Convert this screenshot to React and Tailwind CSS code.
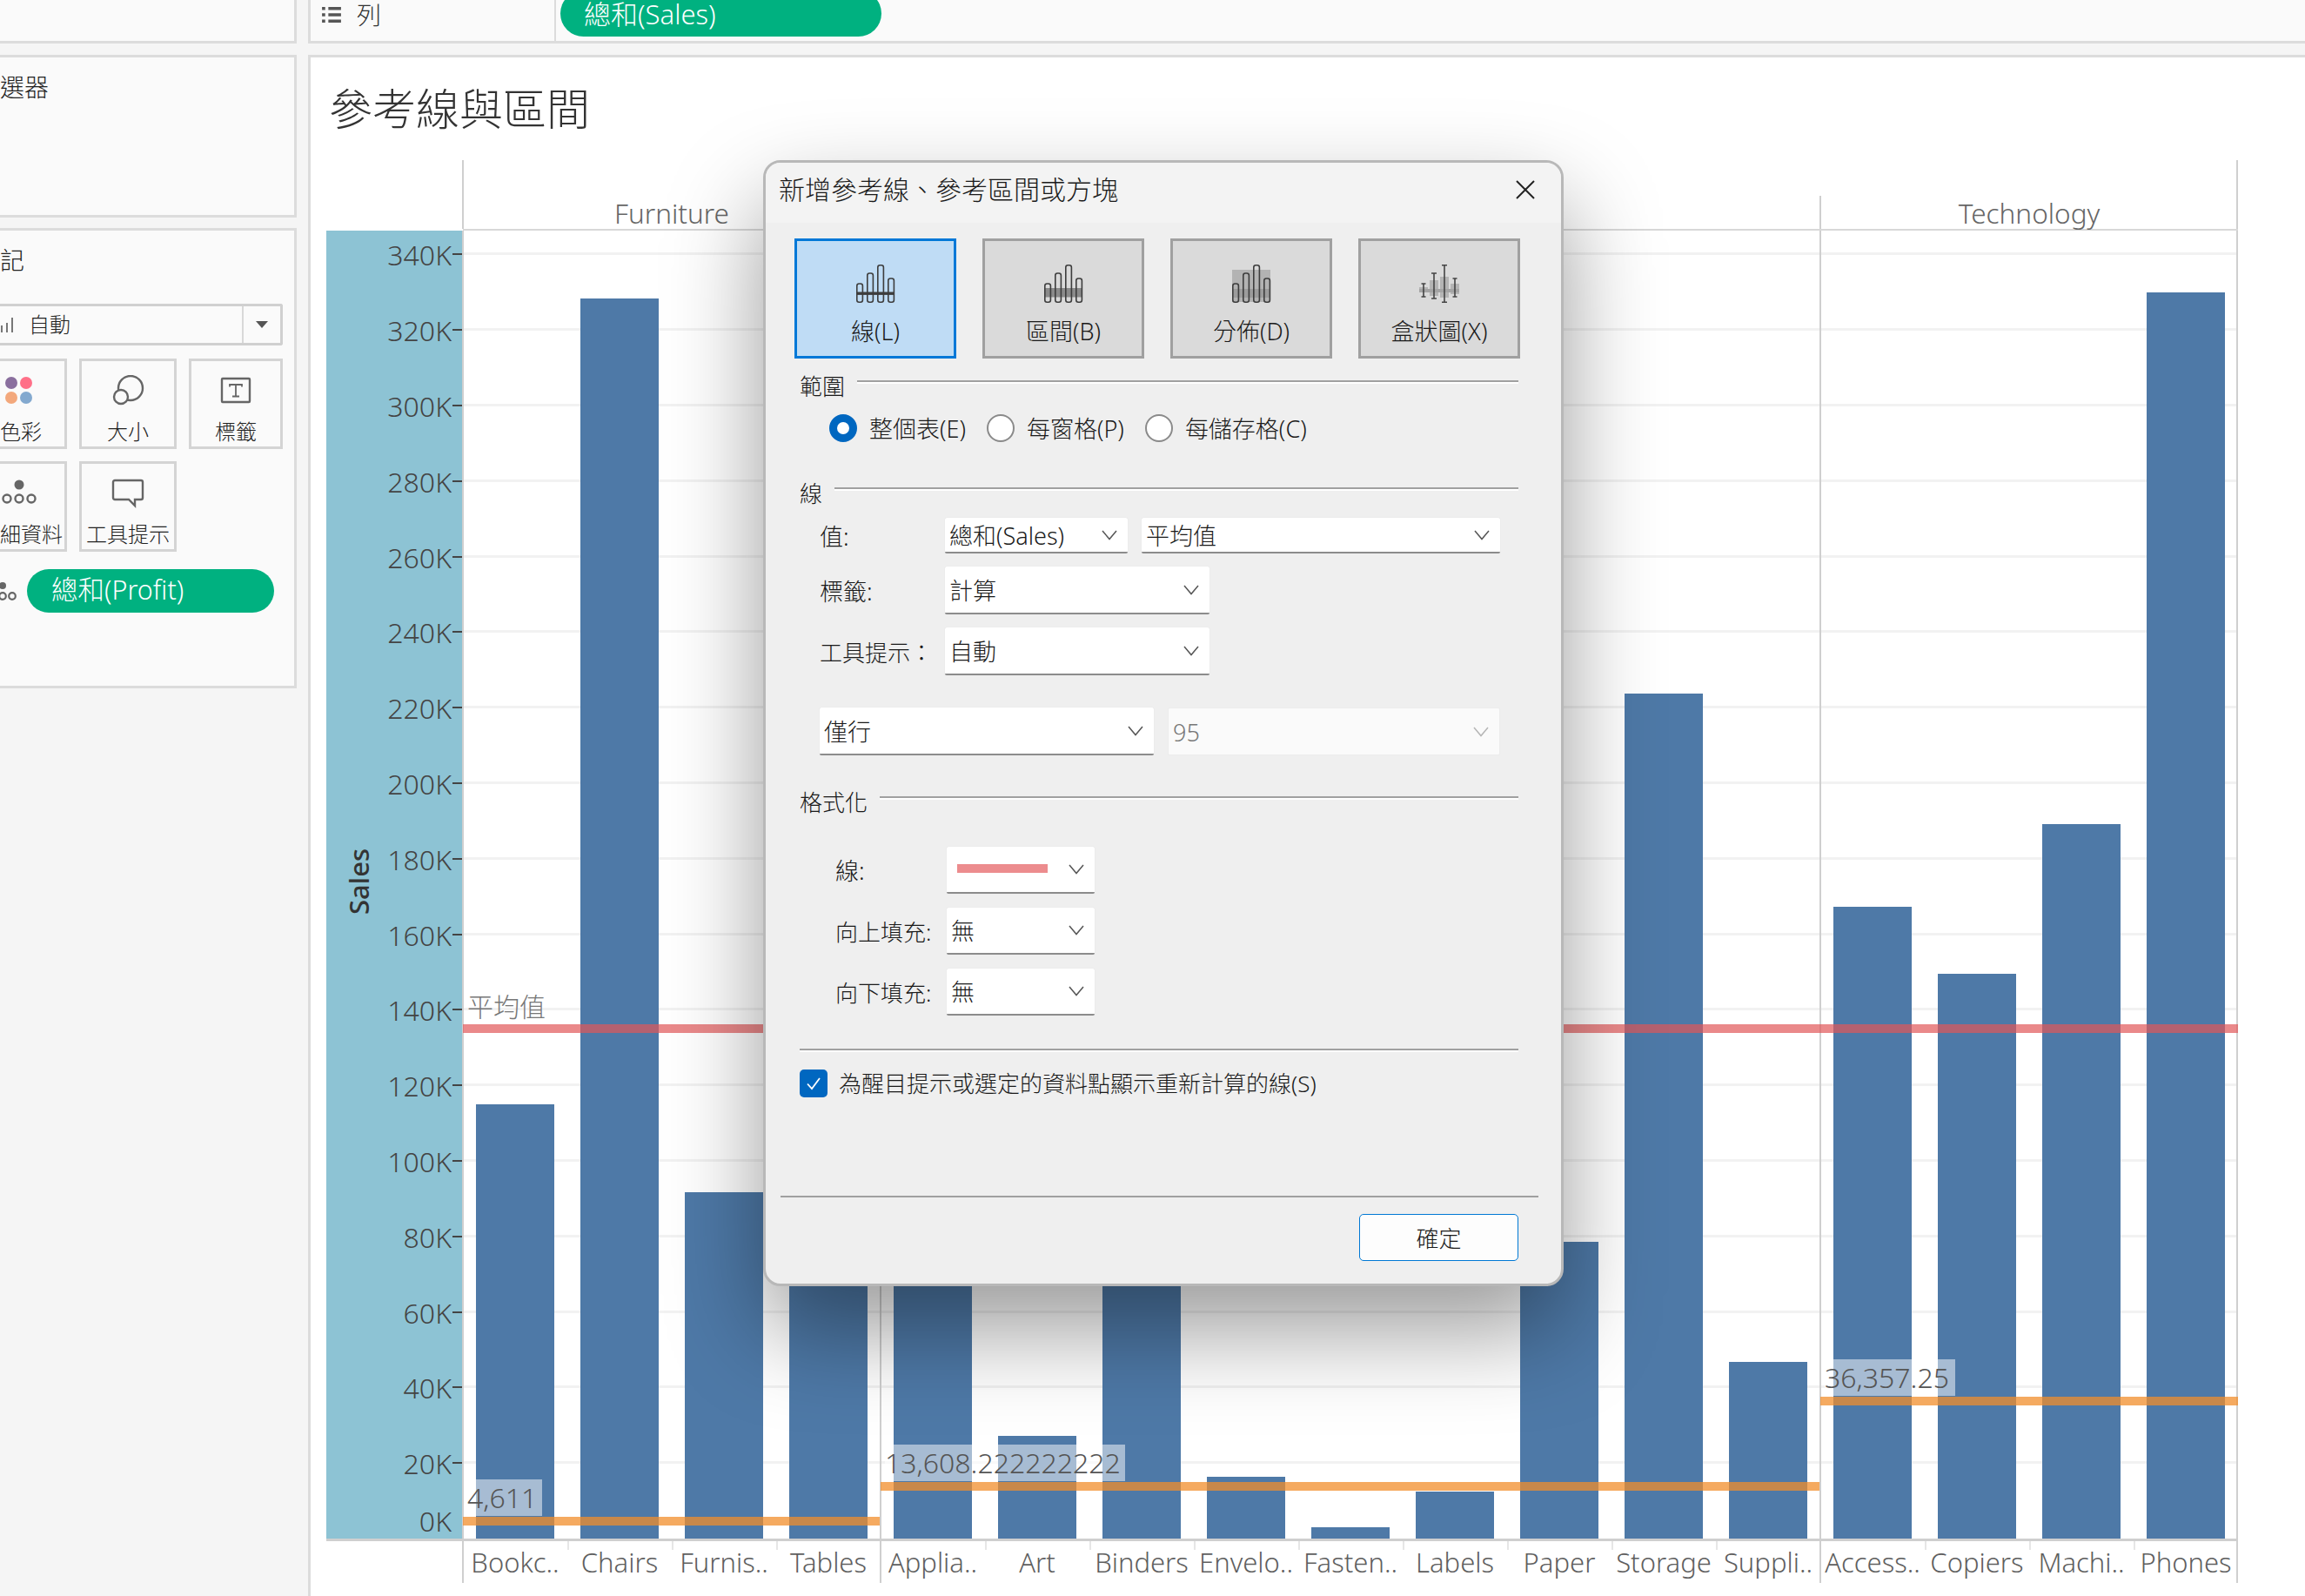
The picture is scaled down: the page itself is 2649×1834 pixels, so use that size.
import React from 'react';

const panes = [
  {
    items: [['Bookc..', 114880], ['Chairs', 328449], ['Furnis..', 91705], ['Tables', 206966]],
    label: '4,611',
    labelBottom: 26,
    labelWidth: 86,
    lineBottom: 15,
  },
  {
    items: [
      ['Applia..', 107532], ['Art', 27119], ['Binders', 203413], ['Envelo..', 16476], ['Fasten..', 3024],
      ['Labels', 12486], ['Paper', 78479], ['Storage', 223844], ['Suppli..', 46674],
    ],
    label: '13,608.222222222',
    labelBottom: 66,
    labelWidth: 276,
    lineBottom: 55,
  },
  {
    items: [['Access..', 167380], ['Copiers', 149528], ['Machi..', 189239], ['Phones', 330007]],
    label: '36,357.25',
    labelBottom: 164,
    labelWidth: 150,
    lineBottom: 153,
  },
];

const PX_PER_K = 4.34;
const ticks = [];
for (let v = 0; v <= 340; v += 20) ticks.push(v);

const Chevron = ({ light }) => (
  <svg width="18" height="12" viewBox="0 0 18 12" fill="none" stroke={light ? '#b5b5b5' : '#555'} strokeWidth="1.5">
    <path d="M1 1 L9 10.5 L17 1" />
  </svg>
);

const Select = ({ width, height, children, disabled }) => (
  <div
    style={{ width, height }}
    className={`shrink-0 flex items-center justify-between pl-[5px] pr-[12px] rounded-[2px] ${
      disabled
        ? 'bg-[#fafafa] border border-[#ececec] text-[#777]'
        : 'bg-white border-b-2 border-[#8c8c8c] shadow-[0_0_1px_rgba(0,0,0,0.12)]'
    }`}
  >
    <span className="whitespace-nowrap pt-[2px]">{children}</span>
    <Chevron light={disabled} />
  </div>
);

const Section = ({ title, gap }) => (
  <div className="flex items-start h-[34px]" style={{ columnGap: gap }}>
    <span className="leading-[34px] whitespace-nowrap text-[26px]">{title}</span>
    <div className="flex-1 mt-[10px] h-[4px] border-t-2 border-b-2 border-t-[#a0a0a0] border-b-white" />
  </div>
);

const Radio = ({ checked, children }) => (
  <div className="flex items-center gap-[14px]">
    <span
      className={`w-[32px] h-[32px] rounded-full bg-white ${
        checked ? 'border-[9px] border-[#0067c0]' : 'border-2 border-[#8a8a8a] bg-[#f6f6f6]'
      }`}
    />
    <span className="whitespace-nowrap pt-[2px]">{children}</span>
  </div>
);

const Bars = ({ children }) => (
  <>
    {children}
    {[[0.8, 22], [12.8, 10], [24.8, 0.8], [36.8, 16]].map(([x, y]) => (
      <rect key={x} x={x} y={y} width="6.6" height={43.2 - y} rx="2.4" fill="none" stroke="#3d3d3d" strokeWidth="1.6" />
    ))}
  </>
);

const TypeIcon = ({ kind }) => (
  <svg width="44" height="44" viewBox="0 0 44 44" className="overflow-visible">
    {kind === 'line' && (
      <Bars>
        <rect x="0" y="31.5" width="44" height="3.4" fill="#3d3d3d" />
      </Bars>
    )}
    {kind === 'band' && (
      <Bars>
        <rect x="0" y="27" width="44" height="10.5" fill="#8a8a8a" />
      </Bars>
    )}
    {kind === 'dist' && (
      <Bars>
        <rect x="0" y="6" width="44" height="37" fill="#b3b3b3" />
        <rect x="0" y="28" width="44" height="10" fill="#9c9c9c" />
      </Bars>
    )}
    {kind === 'box' && (
      <g>
        <rect x="-1" y="26" width="10" height="6" fill="#b4b4b4" />
        <rect x="11" y="18" width="10" height="18" fill="#b4b4b4" />
        <rect x="23" y="14" width="10" height="24" fill="#b4b4b4" />
        <rect x="35" y="22" width="10" height="12" fill="#b4b4b4" />
        <rect x="-1" y="28" width="46" height="4" fill="#a4a4a4" />
        <path
          d="M4 22v15M1.5 22h5M1.5 37h5M16 10v29M13 10h6M13 39h6M28 0.8v42.4M25 0.8h6M25 43.2h6M40 16v21M37.5 16h5M37.5 37h5"
          stroke="#444"
          strokeWidth="1.6"
          fill="none"
        />
      </g>
    )}
  </svg>
);

const TypeButton = ({ kind, active, children }) => (
  <div
    className={`shrink-0 w-[186px] h-[138px] border-[3px] flex flex-col items-center pt-[27px] ${
      active ? 'bg-[#bfdcf5] border-[#0078d7]' : 'bg-[#dadada] border-[#a0a0a0]'
    }`}
  >
    <TypeIcon kind={kind} />
    <span className="mt-[15px] leading-[36px]">{children}</span>
  </div>
);

const MarkCard = ({ icon, label, width, first }) => (
  <div
    style={{ width }}
    className={`h-[104px] border-[3px] border-[#d4d4d4] flex flex-col ${first ? 'border-l-0 items-start' : 'items-center'}`}
  >
    <div className="h-[56px] mt-[6px] flex items-center">{icon}</div>
    <span className="mt-[4px] leading-[30px] whitespace-nowrap">{label}</span>
  </div>
);

const ColorIcon = () => (
  <svg width="38" height="36" viewBox="0 0 38 36" className="-ml-[1px]">
    <circle cx="14" cy="9" r="7" fill="#8a6f9e" />
    <circle cx="31" cy="9" r="7" fill="#ff7088" />
    <circle cx="14" cy="26" r="7" fill="#f3a87c" />
    <circle cx="31" cy="26" r="7" fill="#83a9cf" />
  </svg>
);

const SizeIcon = () => (
  <svg width="38" height="36" viewBox="0 0 38 36" fill="none" stroke="#666" strokeWidth="2.4">
    <circle cx="22" cy="15" r="14" />
    <circle cx="11" cy="25" r="8" fill="#fafafa" />
  </svg>
);

const LabelIcon = () => (
  <svg width="36" height="32" viewBox="0 0 36 32" fill="none" stroke="#666" strokeWidth="2.4">
    <rect x="2" y="2" width="32" height="27" rx="1" />
    <path d="M11 11.5V9h14v2.5M18 9v13M14 22.5h8" strokeWidth="1.8" />
  </svg>
);

const DetailIcon = () => (
  <svg width="42" height="34" viewBox="0 0 42 34" fill="none" stroke="#666" strokeWidth="2.4">
    <circle cx="22" cy="7" r="5.5" fill="#666" stroke="none" />
    <circle cx="8" cy="23" r="4.5" />
    <circle cx="22" cy="23" r="4.5" />
    <circle cx="36" cy="23" r="4.5" />
  </svg>
);

const TooltipIcon = () => (
  <svg width="38" height="34" viewBox="0 0 38 34" fill="none" stroke="#666" strokeWidth="2.4">
    <path d="M4 2h30a2 2 0 0 1 2 2v18a2 2 0 0 1-2 2h-7v7l-7-7H4a2 2 0 0 1-2-2V4a2 2 0 0 1 2-2z" />
  </svg>
);

const LeftPanel = () => (
  <div className="w-[341px] mr-[13px] flex flex-col shrink-0 text-[24px] text-[#222]">
    <div className="h-[50px] bg-[#fafafa] border-r-[3px] border-b-[3px] border-[#dcdcdc]" />
    <div className="mt-[13px] h-[187px] bg-[#fafafa] border-y-[3px] border-r-[3px] border-[#dcdcdc]">
      <div className="text-[28px] leading-[34px] mt-[17px]">選器</div>
    </div>
    <div className="mt-[12px] h-[529px] bg-[#fafafa] border-y-[3px] border-r-[3px] border-[#dcdcdc] pr-[13px]">
      <div className="text-[28px] leading-[34px] mt-[17px]">記</div>
      <div className="mt-[33px] h-[48px] border-y-[3px] border-r-[3px] border-[#d0d0d0] rounded-r-[3px] flex items-center">
        <svg width="16" height="20" viewBox="0 0 16 20" fill="none" stroke="#777" strokeWidth="2">
          <path d="M2 11v8M8 8v11M14 2v17" />
        </svg>
        <span className="ml-[17px] flex-1">自動</span>
        <div className="w-[44px] h-full border-l-2 border-[#d8d8d8] flex items-center justify-center">
          <div className="w-0 h-0 border-x-[7px] border-x-transparent border-t-[8px] border-t-[#555]" />
        </div>
      </div>
      <div className="mt-[15px] flex gap-[14px]">
        <MarkCard first width={77} icon={<ColorIcon />} label="色彩" />
        <MarkCard width={112} icon={<SizeIcon />} label="大小" />
        <MarkCard width={108} icon={<LabelIcon />} label="標籤" />
      </div>
      <div className="mt-[14px] flex gap-[14px]">
        <MarkCard first width={77} icon={<DetailIcon />} label="細資料" />
        <MarkCard width={112} icon={<TooltipIcon />} label="工具提示" />
      </div>
      <div className="mt-[20px] flex items-center h-[50px]">
        <svg width="22" height="30" viewBox="0 0 22 30" fill="none" stroke="#666" strokeWidth="2.2" className="-ml-[3px] mr-[12px] mt-[4px]">
          <circle cx="6" cy="7" r="4" fill="#666" stroke="none" />
          <circle cx="6" cy="19" r="3.8" />
          <circle cx="17" cy="19" r="3.8" />
        </svg>
        <div className="w-[284px] h-[50px] rounded-full bg-[#00b180] text-white text-[30.5px] leading-[46px] flex items-start pl-[28px]">
          總和(Profit)
        </div>
      </div>
    </div>
  </div>
);

const paneLine = 'shadow-[-1px_0_0_#cfcfcf,inset_1px_0_0_#cfcfcf]';
const lastPaneLine = 'shadow-[-1px_0_0_#cfcfcf,inset_1px_0_0_#cfcfcf,inset_-2px_0_0_#cfcfcf]';

const ChartArea = () => (
  <div className="flex flex-col">
    {/* pane headers */}
    <div className="flex h-[81px]">
      <div className="w-[157px]" />
      <div className="w-[2040px] flex border-b-2 border-[#d8d8d8] text-[31.5px] text-[#666]">
        <div className={`w-[480px] flex items-end justify-center leading-[36px] ${paneLine}`}>Furniture</div>
        <div className="w-[1080px]" />
        <div className="w-[480px] relative flex items-end justify-center leading-[36px] shadow-[inset_-2px_0_0_#cfcfcf]">
          <div className="absolute -left-[1px] bottom-0 top-[41px] w-[2px] bg-[#cfcfcf]" />
          Technology
        </div>
      </div>
    </div>

    {/* plot */}
    <div className="flex h-[1503px]">
      <div className="relative w-[157px] bg-[#8dc3d4] text-[32px] text-[#444]">
        {ticks.map((v) => (
          <div key={v}>
            <div
              className="absolute right-[13px] leading-[40px] whitespace-nowrap"
              style={{ bottom: v === 0 ? 0 : v * PX_PER_K - 21 }}
            >
              {v}K
            </div>
            {v > 0 && (
              <div className="absolute right-0 w-[12px] h-[2px] bg-[#444]" style={{ bottom: v * PX_PER_K - 1 }} />
            )}
          </div>
        ))}
        <div className="absolute left-[37px] top-[748px] -translate-x-1/2 -translate-y-1/2 -rotate-90 text-[31px] font-medium text-[#333] whitespace-nowrap">
          Sales
        </div>
      </div>

      <div className="relative w-[2040px] flex">
        {ticks.filter((v) => v > 0).map((v) => (
          <div key={v} className="absolute left-0 right-0 h-[3px] bg-[#f2f2f2]" style={{ bottom: v * PX_PER_K - 1 }} />
        ))}
        {panes.map((pane, i) => (
          <div key={pane.label} className={`relative flex items-end ${i === 2 ? lastPaneLine : paneLine}`}>
            {pane.items.map(([name, value]) => (
              <div key={name} className="w-[120px] px-[15px]">
                <div className="bg-[#4e79a7]" style={{ height: (value / 1000) * PX_PER_K }} />
              </div>
            ))}
            <div
              className="absolute left-[5px] h-[42px] leading-[42px] bg-white/50 text-[32px] text-[#555] whitespace-nowrap"
              style={{ bottom: pane.labelBottom, width: pane.labelWidth }}
            >
              {pane.label}
            </div>
            <div
              className="absolute left-0 right-0 h-[10px] bg-[#f28e2b]/75"
              style={{ bottom: pane.lineBottom }}
            />
          </div>
        ))}
        <div className="absolute left-0 right-0 bottom-[581px] h-[10px] bg-[#e15759]/70" />
        <div className="absolute left-[5px] bottom-[591px] leading-[40px] text-[30px] text-[#777]">平均值</div>
      </div>
    </div>

    {/* axis */}
    <div className="h-[3px] w-[2197px] bg-[#cfcfcf]" />
    <div className="flex h-[48px] text-[31px] text-[#5f5f5f]">
      <div className="w-[157px]" />
      {panes.map((pane, i) => (
        <div key={pane.label} className={`flex ${i === 2 ? lastPaneLine : paneLine}`}>
          {pane.items.map(([name], j) => (
            <div key={name} className="relative w-[120px] flex items-center justify-center whitespace-nowrap leading-[46px]">
              {j > 0 && <div className="absolute left-0 top-0 w-[2px] h-[10px] bg-[#e6e6e6]" />}
              {name}
            </div>
          ))}
        </div>
      ))}
    </div>
  </div>
);

const Dialog = () => (
  <div className="absolute left-[877px] top-[184px] w-[920px] h-[1294px] rounded-[20px] border-[3px] border-[#b8b8b8] bg-[#efefef] flex flex-col overflow-hidden shadow-[0_50px_110px_rgba(0,0,0,0.4)] text-[27px] text-[#1a1a1a] z-10">
    <div className="h-[69px] shrink-0 bg-[#f3f3f3] flex items-center justify-between pl-[15px] pr-[30px] pb-[8px]">
      <span className="text-[30px] whitespace-nowrap">新增參考線、參考區間或方塊</span>
      <svg width="22" height="22" viewBox="0 0 22 22" stroke="#222" strokeWidth="2">
        <path d="M1 1L21 21M21 1L1 21" />
      </svg>
    </div>

    <div className="flex-1 flex flex-col pl-[39px] pr-[49px] leading-[34px]">
      <div className="flex gap-[30px] -ml-[6px] mt-[18px]">
        <TypeButton kind="line" active>線(L)</TypeButton>
        <TypeButton kind="band">區間(B)</TypeButton>
        <TypeButton kind="dist">分佈(D)</TypeButton>
        <TypeButton kind="box">盒狀圖(X)</TypeButton>
      </div>

      <div className="mt-[15px]"><Section title="範圍" gap={14} /></div>
      <div className="mt-[14px] ml-[34px] flex items-center gap-[24px] h-[34px]">
        <Radio checked>整個表(E)</Radio>
        <Radio>每窗格(P)</Radio>
        <Radio>每儲存格(C)</Radio>
      </div>

      <div className="mt-[41px]"><Section title="線" gap={14} /></div>
      <div className="mt-[11px] flex items-center pl-[23px]">
        <span className="w-[144px] pt-[2px]">值:</span>
        <Select width={210} height={41}>總和(Sales)</Select>
        <div className="w-[16px]" />
        <Select width={412} height={41}>平均值</Select>
      </div>
      <div className="mt-[15px] flex items-center pl-[23px]">
        <span className="w-[144px] pt-[2px]">標籤:</span>
        <Select width={304} height={55}>計算</Select>
      </div>
      <div className="mt-[15px] flex items-center pl-[23px]">
        <span className="w-[144px] pt-[2px] text-[26px] whitespace-nowrap">工具提示：</span>
        <Select width={304} height={55}>自動</Select>
      </div>
      <div className="mt-[37px] flex items-center gap-[16px] pl-[23px]">
        <Select width={384} height={55}>僅行</Select>
        <Select width={382} height={55} disabled>95</Select>
      </div>

      <div className="mt-[37px]"><Section title="格式化" gap={14} /></div>
      <div className="mt-[34px] flex items-center pl-[41px]">
        <span className="w-[128px] pt-[2px]">線:</span>
        <Select width={170} height={54}>
          <div className="w-[104px] h-[10px] ml-[7px] -mt-[4px] bg-[#ec8c8e]" />
        </Select>
      </div>
      <div className="mt-[16px] flex items-center pl-[41px]">
        <span className="w-[128px] pt-[2px] text-[26px] whitespace-nowrap">向上填充:</span>
        <Select width={170} height={54}>無</Select>
      </div>
      <div className="mt-[16px] flex items-center pl-[41px]">
        <span className="w-[128px] pt-[2px] text-[26px] whitespace-nowrap">向下填充:</span>
        <Select width={170} height={54}>無</Select>
      </div>

      <div className="mt-[38px] h-[4px] border-t-2 border-b-2 border-t-[#a0a0a0] border-b-white" />

      <div className="mt-[19px] flex items-center gap-[13px]">
        <div className="w-[32px] h-[32px] rounded-[5px] bg-[#0067c0] flex items-center justify-center">
          <svg width="18" height="16" viewBox="0 0 18 16" fill="none" stroke="white" strokeWidth="1.8">
            <path d="M2 8.5L7 14L16 2" />
          </svg>
        </div>
        <span className="whitespace-nowrap text-[26px]">為醒目提示或選定的資料點顯示重新計算的線(S)</span>
      </div>
    </div>

    <div className="ml-[17px] mr-[26px] h-[101px] shrink-0 border-t-2 border-[#a0a0a0] pt-[19px] pr-[23px] flex justify-end">
      <button className="w-[183px] h-[54px] pt-[2px] bg-[#fdfdfd] border-[1.5px] border-[#0078d4] rounded-[5px] text-[26px]">確定</button>
    </div>
  </div>
);

export default function App() {
  return (
    <div className="relative w-[2649px] h-[1834px] overflow-hidden bg-[#f5f5f5] flex font-['Noto_Sans','Noto_Sans_CJK_TC',sans-serif] font-light">
      <LeftPanel />

      <div className="flex-1 flex flex-col min-w-0">
        <div className="h-[50px] shrink-0 flex bg-[#fafafa] border-l-[3px] border-b-[3px] border-[#dcdcdc]">
          <div className="w-[282px] flex items-start border-r-2 border-[#dcdcdc] pl-[12px] text-[28px] leading-[34px] text-[#333]">
            <svg width="24" height="20" viewBox="0 0 24 22" fill="#555" className="mt-[7px] mr-[17px]">
              <path d="M0 1h4v4H0zM8 1h16v4H8zM0 9h4v4H0zM8 9h16v4H8zM0 17h4v4H0zM8 17h16v4H8z" />
            </svg>
            列
          </div>
          <div className="pl-[5px]">
            <div className="w-[369px] h-[53px] -mt-[11px] rounded-full bg-[#00b180] text-white text-[31px] leading-[30px] flex items-center pl-[27px]">
              總和(Sales)
            </div>
          </div>
        </div>

        <div className="mt-[13px] flex-1 bg-white border-l-[3px] border-t-[3px] border-[#dcdcdc] pl-[18px]">
          <div className="h-[118px] pt-[29px] pl-[3px] text-[50px] leading-[60px] text-[#333]">參考線與區間</div>
          <ChartArea />
        </div>
      </div>

      <Dialog />
    </div>
  );
}
